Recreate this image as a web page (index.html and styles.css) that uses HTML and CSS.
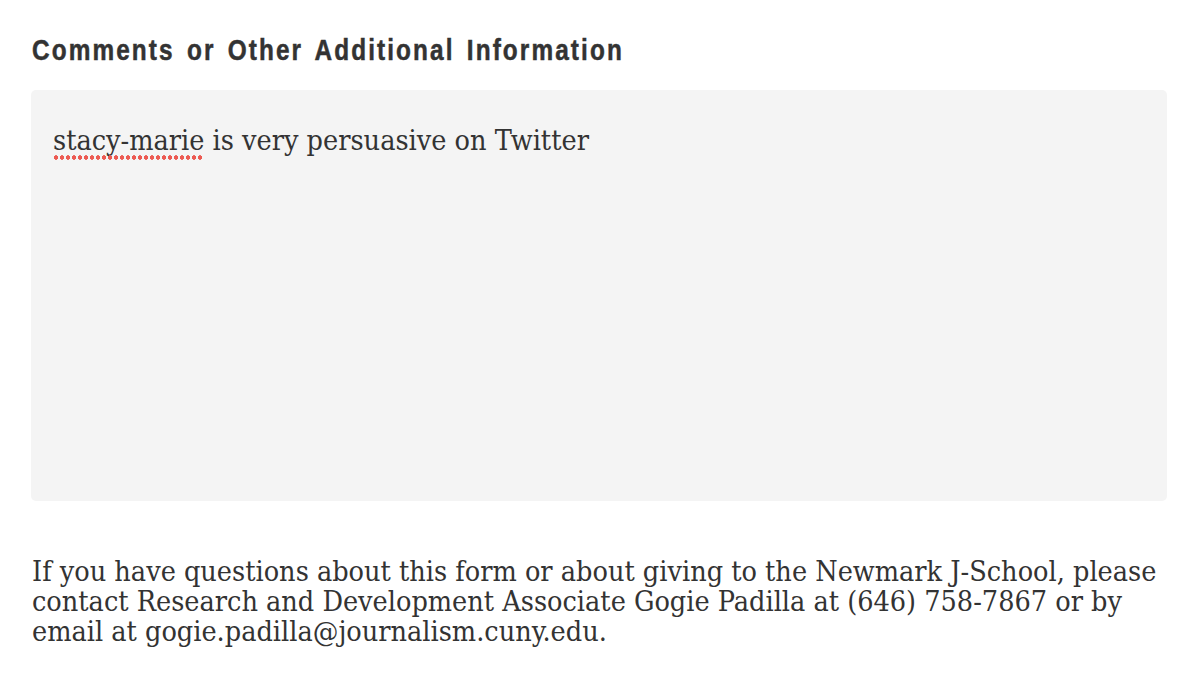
FILE: index.html
```html
<!DOCTYPE html>
<html>
<head>
<meta charset="utf-8">
<link rel="stylesheet" href="styles.css">
</head>
<body>
<div class="page">
  <h2 class="label"><span class="label-text">Comments or Other Additional Information</span></h2>
  <div class="textarea"><span class="misspelled">stacy-marie</span> is very persuasive on Twitter</div>
  <p class="note">If you have questions about this form or about giving to the Newmark J-School, please contact Research and Development Associate Gogie Padilla at (646) 758-7867 or by email at gogie.padilla@journalism.cuny.edu.</p>
</div>
</body>
</html>
```
FILE: styles.css
```css
html, body {
  margin: 0;
  padding: 0;
  background: #ffffff;
}
.page {
  padding: 30px 33px 0 31px;
}
.label {
  margin: 0 0 0 1px;
  font-family: "Liberation Sans", Arial, sans-serif;
  font-weight: 700;
  font-size: 29px;
  line-height: 40px;
  letter-spacing: 2.5px;
  word-spacing: 4px;
  color: #333333;
  white-space: nowrap;
}
.label-text {
  display: inline-block;
  transform: scaleX(0.84);
  transform-origin: 0 50%;
  -webkit-text-stroke: 0.5px #333333;
}
.textarea {
  margin-top: 20px;
  height: 411px;
  box-sizing: border-box;
  background: #f4f4f4;
  border-radius: 5px;
  padding: 34px 22px;
  font-family: "DejaVu Serif", serif;
  font-stretch: condensed;
  font-size: 28.5px;
  line-height: 34px;
  color: #333333;
}
.misspelled {
  position: relative;
}
.misspelled::after {
  content: "";
  position: absolute;
  left: 0;
  right: 0;
  bottom: -3px;
  height: 5px;
  background-image: radial-gradient(circle at 3px 2.5px, #ec5a52 2px, transparent 2.5px);
  background-size: 6px 5px;
  background-repeat: repeat-x;
}
.note {
  margin: 56px 0 0 1px;
  font-family: "DejaVu Serif", serif;
  font-stretch: condensed;
  font-size: 28.5px;
  line-height: 30px;
  color: #333333;
}
```
